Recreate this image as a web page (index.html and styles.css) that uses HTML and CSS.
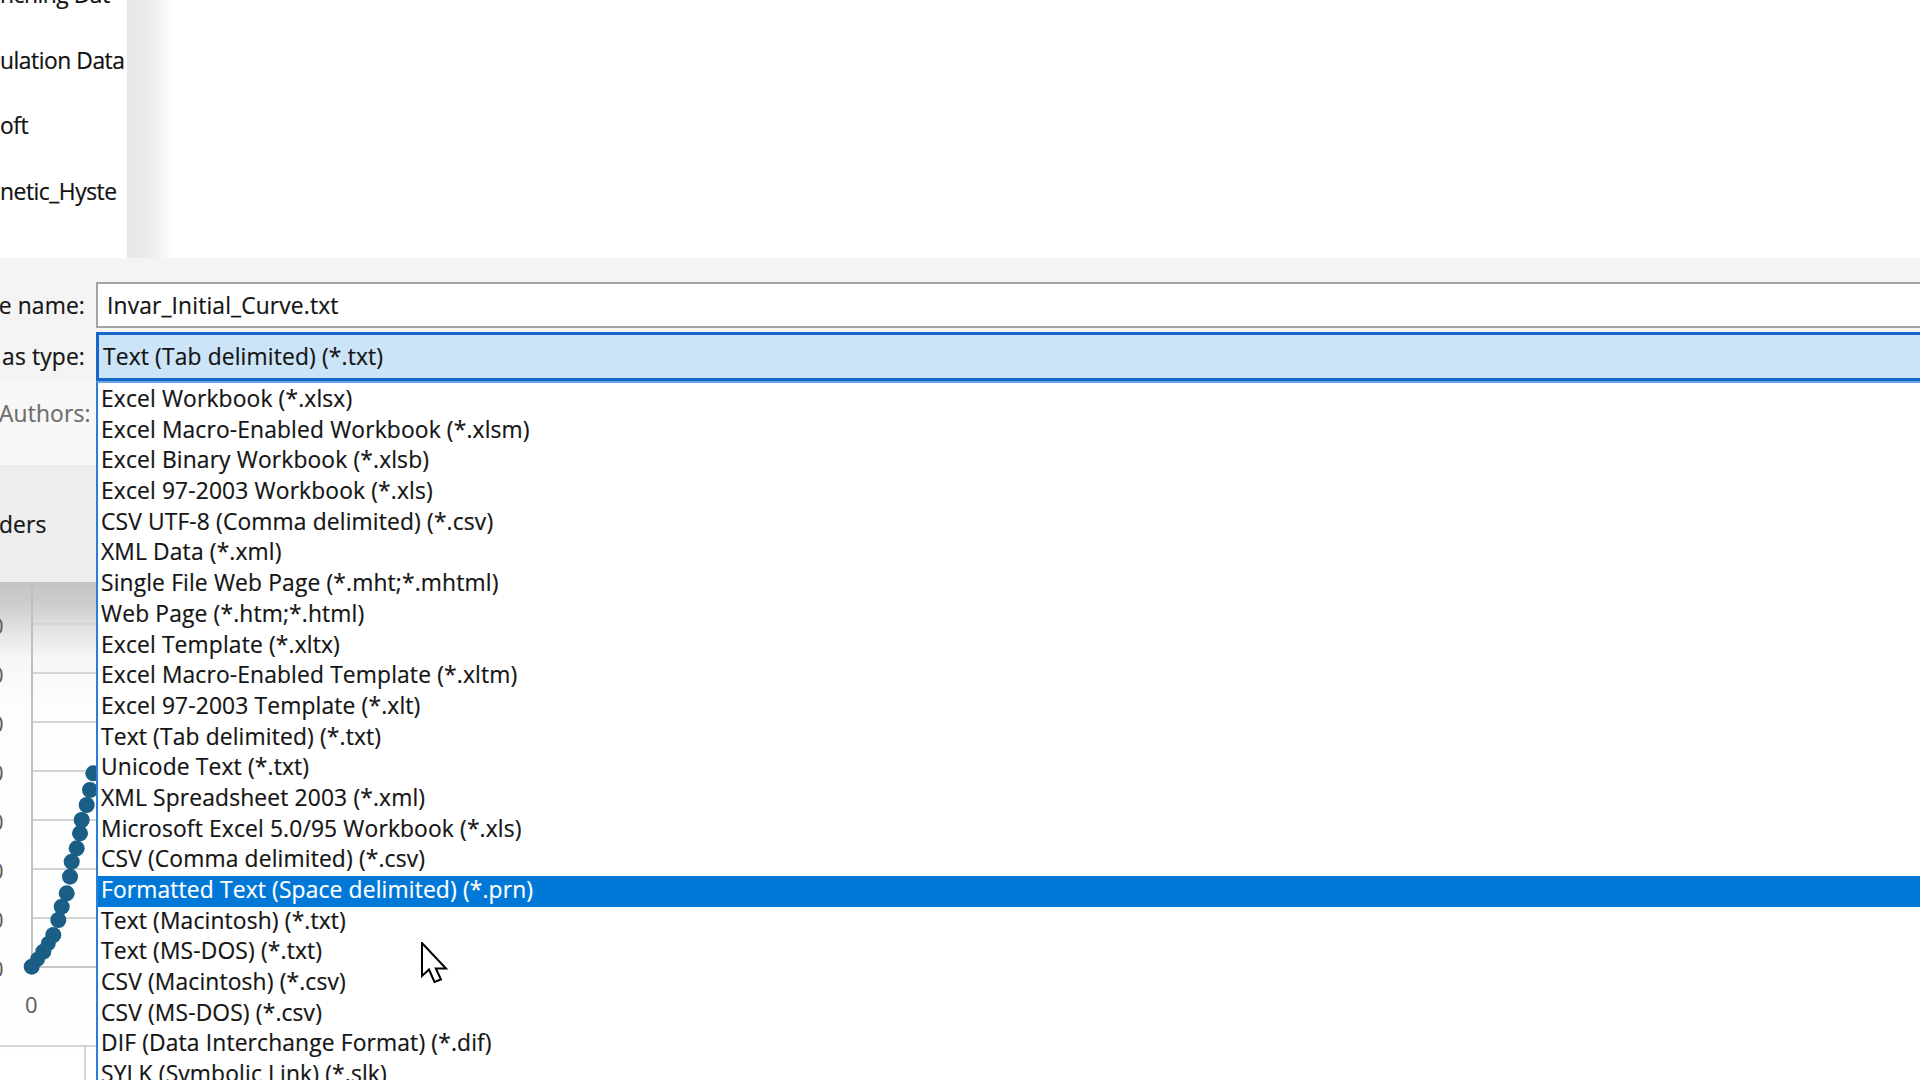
FILE: index.html
```html
<!DOCTYPE html>
<html lang="en">
<head>
<meta charset="utf-8">
<title>Save As</title>
<link rel="stylesheet" href="styles.css">
</head>
<body>
<div class="screen">
  <div class="top">
    <ul class="files">
      <li>nching Dat</li>
      <li>ulation Data</li>
      <li>oft</li>
      <li>netic_Hyste</li>
    </ul>
    <div class="scroll-blur"></div>
  </div>

  <div class="form">
    <div class="field-row name-row">
      <div class="label">e name:</div>
      <div class="input">Invar_Initial_Curve.txt</div>
    </div>
    <div class="field-row type-row">
      <div class="label">as type:</div>
      <div class="select">Text (Tab delimited) (*.txt)</div>
    </div>

    <div class="lower">
      <div class="side">
        <div class="authors">Authors:</div>
        <div class="folders">ders</div>
        <div class="chart">
          <svg width="96" height="498" viewBox="0 0 96 498">
            <defs>
              <linearGradient id="shade" x1="0" y1="0" x2="0" y2="1">
                <stop offset="0" stop-color="#c4c4c4"/>
                <stop offset="0.045" stop-color="#cdcdcd"/>
                <stop offset="0.09" stop-color="#e0e0e0"/>
                <stop offset="0.15" stop-color="#f6f6f6"/>
                <stop offset="0.25" stop-color="#fdfdfd"/>
                <stop offset="1" stop-color="#ffffff"/>
              </linearGradient>
            </defs>
            <rect x="0" y="0" width="96" height="498" fill="url(#shade)"/>
            <g stroke="#d4d4d4" stroke-width="2">
              <line x1="32" y1="42" x2="96" y2="42"/>
              <line x1="32" y1="91" x2="96" y2="91"/>
              <line x1="32" y1="140" x2="96" y2="140"/>
              <line x1="32" y1="189" x2="96" y2="189"/>
              <line x1="32" y1="238" x2="96" y2="238"/>
              <line x1="32" y1="287" x2="96" y2="287"/>
              <line x1="32" y1="336" x2="96" y2="336"/>
              <line x1="0" y1="464" x2="96" y2="464"/>
              <line x1="85" y1="464" x2="85" y2="498"/>
            </g>
            <line x1="32" y1="0" x2="32" y2="386" stroke="#bfbfbf" stroke-width="2"/>
            <line x1="32" y1="385" x2="96" y2="385" stroke="#c8c8c8" stroke-width="2"/>
            <g class="axis-label" fill="#5a5a5a">
              <text x="-9" y="52">0</text>
              <text x="-9" y="101">0</text>
              <text x="-9" y="150">0</text>
              <text x="-9" y="199">0</text>
              <text x="-9" y="248">0</text>
              <text x="-9" y="297">0</text>
              <text x="-9" y="346">0</text>
              <text x="-9" y="395">0</text>
              <text x="25" y="431">0</text>
            </g>
            <g fill="#1a5d85">
              <circle cx="31.7" cy="384.7" r="8"/>
              <circle cx="37.5" cy="377.2" r="7.5"/>
              <circle cx="43.3" cy="369.7" r="8"/>
              <circle cx="48.3" cy="361.4" r="7.5"/>
              <circle cx="53.3" cy="353" r="8"/>
              <circle cx="58.3" cy="338" r="8"/>
              <circle cx="61.7" cy="324.7" r="8"/>
              <circle cx="66.7" cy="311.3" r="8"/>
              <circle cx="70" cy="294.7" r="8"/>
              <circle cx="71.7" cy="279.7" r="8"/>
              <circle cx="76.7" cy="266.3" r="8"/>
              <circle cx="80" cy="251.3" r="8"/>
              <circle cx="81.7" cy="238" r="8"/>
              <circle cx="86.7" cy="223" r="8"/>
              <circle cx="90" cy="208" r="8"/>
              <circle cx="93.3" cy="191.3" r="8"/>
            </g>
          </svg>
        </div>
      </div>

      <ul class="dropdown">
        <li>Excel Workbook (*.xlsx)</li>
        <li>Excel Macro-Enabled Workbook (*.xlsm)</li>
        <li>Excel Binary Workbook (*.xlsb)</li>
        <li>Excel 97-2003 Workbook (*.xls)</li>
        <li>CSV UTF-8 (Comma delimited) (*.csv)</li>
        <li>XML Data (*.xml)</li>
        <li>Single File Web Page (*.mht;*.mhtml)</li>
        <li>Web Page (*.htm;*.html)</li>
        <li>Excel Template (*.xltx)</li>
        <li>Excel Macro-Enabled Template (*.xltm)</li>
        <li>Excel 97-2003 Template (*.xlt)</li>
        <li>Text (Tab delimited) (*.txt)</li>
        <li>Unicode Text (*.txt)</li>
        <li>XML Spreadsheet 2003 (*.xml)</li>
        <li>Microsoft Excel 5.0/95 Workbook (*.xls)</li>
        <li>CSV (Comma delimited) (*.csv)</li>
        <li class="selected">Formatted Text (Space delimited) (*.prn)</li>
        <li>Text (Macintosh) (*.txt)</li>
        <li>Text (MS-DOS) (*.txt)</li>
        <li>CSV (Macintosh) (*.csv)</li>
        <li>CSV (MS-DOS) (*.csv)</li>
        <li>DIF (Data Interchange Format) (*.dif)</li>
        <li>SYLK (Symbolic Link) (*.slk)</li>
      </ul>
    </div>
  </div>

  <svg class="cursor" width="28" height="42" viewBox="-1 -1 28 42">
    <path d="M0 0 L0 33 L7 26.5 L12.5 39 L19 36.5 L13.8 25.5 L24 25.5 Z" fill="#ffffff" stroke="#000000" stroke-width="2" stroke-linejoin="miter"/>
  </svg>
</div>
</body>
</html>
```
FILE: styles.css
```css
html, body {
  margin: 0;
  padding: 0;
}

body {
  width: 1920px;
  height: 1080px;
  overflow: hidden;
  background: #ffffff;
  font-family: "Open Sans", "Noto Sans", sans-serif;
  font-size: 22.8px;
  letter-spacing: 0.15px;
  color: #141414;
  -webkit-text-stroke: 0.2px currentColor;
}

.screen {
  position: relative;
  width: 1920px;
  height: 1080px;
  overflow: hidden;
  display: flex;
  flex-direction: column;
}

/* ---------- top: folder file list ---------- */
.top {
  height: 258px;
  flex: none;
  display: flex;
  background: #ffffff;
  overflow: hidden;
}

.files {
  list-style: none;
  margin: -38px 0 0 0;
  padding: 0;
  width: 127px;
  flex: none;
  overflow: hidden;
}

.files li {
  height: 65.6px;
  line-height: 65.6px;
  white-space: nowrap;
  overflow: hidden;
  letter-spacing: -0.45px;
  color: #111111;
}

.scroll-blur {
  width: 46px;
  flex: none;
  background: linear-gradient(to right, #e7e7e7 0%, #e9e9e9 35%, #f0f0f0 60%, #f8f8f8 82%, #ffffff 100%);
}

/* ---------- form ---------- */
.form {
  flex: 1;
  display: flex;
  flex-direction: column;
  background: #f4f4f4;
  padding-top: 24px;
  min-height: 0;
}

.field-row {
  display: flex;
  align-items: stretch;
  flex: none;
}

.name-row {
  height: 46px;
  margin-bottom: 4px;
}

.type-row {
  height: 49px;
}

.label {
  width: 96px;
  flex: none;
  box-sizing: border-box;
  padding-right: 11px;
  text-align: right;
  white-space: nowrap;
  overflow: hidden;
  display: flex;
  align-items: center;
  justify-content: flex-end;
  color: #141414;
}

.input {
  flex: 1;
  background: #ffffff;
  border: 2px solid #a4a4a4;
  border-right: none;
  box-sizing: border-box;
  padding-left: 9px;
  display: flex;
  align-items: center;
  white-space: nowrap;
  color: #141414;
}

.select {
  flex: 1;
  background: #cce4f7;
  border: 3px solid #1466c8;
  border-right: none;
  box-sizing: border-box;
  padding-left: 4px;
  display: flex;
  align-items: center;
  white-space: nowrap;
  color: #141414;
}

/* ---------- lower part: side + dropdown ---------- */
.lower {
  flex: 1;
  display: flex;
  min-height: 0;
}

.side {
  width: 96px;
  flex: none;
  display: flex;
  flex-direction: column;
  overflow: hidden;
}

.authors {
  height: 84px;
  flex: none;
  background: #f8f8f8;
  color: #6d6d6d;
  white-space: nowrap;
  line-height: 28px;
  padding-top: 19px;
  box-sizing: border-box;
  margin-left: -1px;
}

.folders {
  height: 117px;
  flex: none;
  background: #ededed;
  white-space: nowrap;
  box-sizing: border-box;
  padding-top: 46px;
  line-height: 28px;
  margin-left: -1px;
  color: #141414;
}

.chart {
  flex: 1;
  background: #ffffff;
}

.chart svg {
  display: block;
}

.axis-label text {
  font-family: "Open Sans", sans-serif;
  font-size: 22px;
  -webkit-text-stroke: 0;
}

.dropdown {
  flex: 1;
  list-style: none;
  margin: 0;
  padding: 2px 0 0 0;
  background: #ffffff;
  border-left: 2px solid #2a7fd8;
  border-top: 2px solid #6aa6e6;
  overflow: hidden;
}

.dropdown li {
  height: 30.7px;
  line-height: 27.7px;
  padding-bottom: 3px;
  padding-left: 3px;
  box-sizing: border-box;
  white-space: nowrap;
  color: #141414;
}

.dropdown li.selected {
  background: #0078d7;
  color: #ffffff;
}

/* mouse pointer overlay */
.cursor {
  position: absolute;
  left: 421px;
  top: 942px;
}
```
